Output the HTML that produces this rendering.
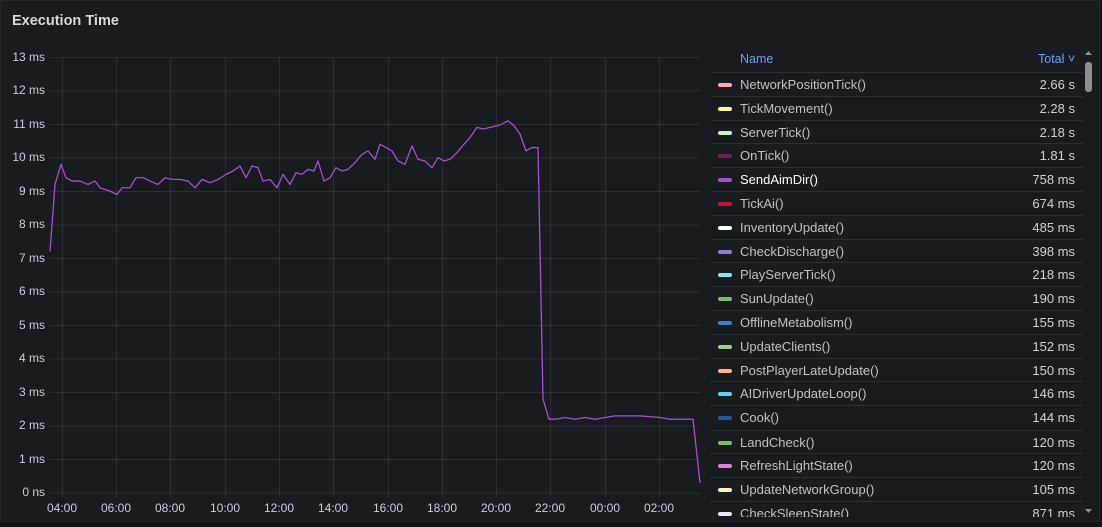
<!DOCTYPE html>
<html><head><meta charset="utf-8"><style>
*{margin:0;padding:0;box-sizing:border-box}
body{width:1102px;height:527px;background:#111217;overflow:hidden;font-family:"Liberation Sans",sans-serif;position:relative}
.panel{position:absolute;left:0;top:0;width:1100px;height:522px;background:#181b1f;border:1px solid #25272d;border-radius:2px}
.title{position:absolute;left:12px;top:13px;color:#d8d9dc;font-size:14.5px;font-weight:bold}
.yl{position:absolute;right:1057px;color:#ccccdc;font-size:12px;width:40px;text-align:right}
.xl{position:absolute;top:501px;color:#ccccdc;font-size:12px;width:50px;text-align:center}
.hdr{position:absolute;top:52px;color:#6e9fff;font-size:12.5px}
.row{position:absolute;left:710px;width:373px;height:24px;border-top:1px solid #2c2e33;font-size:13px;color:#bfc0c6}
.row .d{position:absolute;left:8px;top:10px;width:14px;height:4px;border-radius:2px}
.row .n{position:absolute;left:30px;top:4px}
.row .v{position:absolute;right:8px;top:4px;color:#d0d1d6}
</style></head><body>
<div class="panel"></div>
<div class="title">Execution Time</div>
<svg style="position:absolute;left:0;top:0" width="1102" height="527">
<g stroke="#2c2e33" stroke-width="1">
<line x1="50" x2="700" y1="57.5" y2="57.5"/><line x1="50" x2="700" y1="91" y2="91"/><line x1="50" x2="700" y1="124.5" y2="124.5"/><line x1="50" x2="700" y1="158" y2="158"/><line x1="50" x2="700" y1="191.5" y2="191.5"/><line x1="50" x2="700" y1="225" y2="225"/><line x1="50" x2="700" y1="258.5" y2="258.5"/><line x1="50" x2="700" y1="292" y2="292"/><line x1="50" x2="700" y1="325.5" y2="325.5"/><line x1="50" x2="700" y1="359" y2="359"/><line x1="50" x2="700" y1="392.5" y2="392.5"/><line x1="50" x2="700" y1="426" y2="426"/><line x1="50" x2="700" y1="459.5" y2="459.5"/><line x1="50" x2="700" y1="493" y2="493"/>
<line y1="57" y2="497" x1="62.5" x2="62.5"/><line y1="57" y2="497" x1="116.5" x2="116.5"/><line y1="57" y2="497" x1="170.5" x2="170.5"/><line y1="57" y2="497" x1="225.5" x2="225.5"/><line y1="57" y2="497" x1="279.5" x2="279.5"/><line y1="57" y2="497" x1="333.5" x2="333.5"/><line y1="57" y2="497" x1="388.5" x2="388.5"/><line y1="57" y2="497" x1="442.5" x2="442.5"/><line y1="57" y2="497" x1="496.5" x2="496.5"/><line y1="57" y2="497" x1="550.5" x2="550.5"/><line y1="57" y2="497" x1="605.5" x2="605.5"/><line y1="57" y2="497" x1="659.5" x2="659.5"/>
</g>
<g transform="translate(0,493) scale(1,-33.54)">
<polyline fill="none" stroke="#a352cc" stroke-width="1.3" vector-effect="non-scaling-stroke" stroke-linejoin="round" points="50,7.2 55,9.2 61,9.8 66,9.4 72,9.3 80,9.3 88,9.2 95,9.3 100,9.1 110,9.0 117,8.9 122,9.1 130,9.1 136,9.4 143,9.4 150,9.3 158,9.2 165,9.4 172,9.35 180,9.35 188,9.3 195,9.1 202,9.35 210,9.25 218,9.35 226,9.5 233,9.6 240,9.75 246,9.4 252,9.75 258,9.7 263,9.3 270,9.35 277,9.1 283,9.5 290,9.2 296,9.55 302,9.5 308,9.65 314,9.6 318,9.9 324,9.3 330,9.4 336,9.7 342,9.6 348,9.65 355,9.85 362,10.1 368,10.2 375,9.95 380,10.4 386,10.3 392,10.2 398,9.9 405,9.8 412,10.35 418,9.95 425,9.9 432,9.7 438,10 444,9.9 450,9.95 457,10.15 464,10.4 470,10.6 477,10.9 483,10.85 490,10.9 497,10.95 502,11 508,11.1 514,10.95 520,10.7 526,10.2 532,10.3 538,10.3 543,2.8 549,2.2 556,2.2 565,2.25 575,2.2 585,2.25 595,2.2 605,2.25 615,2.3 640,2.3 660,2.25 670,2.2 680,2.2 693,2.2 700,0.3"/>
</g>
<rect x="1085" y="62" width="7" height="30" rx="3" fill="#8e8e95"/>
<path d="M1085,55 l3.5,-4 l3.5,4z" fill="#8e8e95"/><path d="M1085,509 l3.5,4 l3.5,-4z" fill="#8e8e95"/>
</svg>
<div class="yl" style="top:50px">13 ms</div><div class="yl" style="top:83px">12 ms</div><div class="yl" style="top:117px">11 ms</div><div class="yl" style="top:150px">10 ms</div><div class="yl" style="top:184px">9 ms</div><div class="yl" style="top:217px">8 ms</div><div class="yl" style="top:251px">7 ms</div><div class="yl" style="top:284px">6 ms</div><div class="yl" style="top:318px">5 ms</div><div class="yl" style="top:351px">4 ms</div><div class="yl" style="top:385px">3 ms</div><div class="yl" style="top:418px">2 ms</div><div class="yl" style="top:452px">1 ms</div><div class="yl" style="top:485px">0 ns</div>
<div class="xl" style="left:37px">04:00</div><div class="xl" style="left:91px">06:00</div><div class="xl" style="left:145px">08:00</div><div class="xl" style="left:200px">10:00</div><div class="xl" style="left:254px">12:00</div><div class="xl" style="left:308px">14:00</div><div class="xl" style="left:363px">16:00</div><div class="xl" style="left:417px">18:00</div><div class="xl" style="left:471px">20:00</div><div class="xl" style="left:525px">22:00</div><div class="xl" style="left:580px">00:00</div><div class="xl" style="left:634px">02:00</div>
<div class="hdr" style="left:740px">Name</div><div class="hdr" style="left:1038px">Total ˅</div>
<div class="row" style="top:72px"><span class="d" style="background:#ffa6b0"></span><span class="n">NetworkPositionTick()</span><span class="v">2.66 s</span></div>
<div class="row" style="top:96px"><span class="d" style="background:#fff899"></span><span class="n">TickMovement()</span><span class="v">2.28 s</span></div>
<div class="row" style="top:120px"><span class="d" style="background:#c8f2c2"></span><span class="n">ServerTick()</span><span class="v">2.18 s</span></div>
<div class="row" style="top:143px"><span class="d" style="background:#6e1f5e"></span><span class="n">OnTick()</span><span class="v">1.81 s</span></div>
<div class="row" style="top:167px"><span class="d" style="background:#a352cc"></span><span class="n" style="color:#fff">SendAimDir()</span><span class="v">758 ms</span></div>
<div class="row" style="top:191px"><span class="d" style="background:#c4162a"></span><span class="n">TickAi()</span><span class="v">674 ms</span></div>
<div class="row" style="top:215px"><span class="d" style="background:#f0fcff"></span><span class="n">InventoryUpdate()</span><span class="v">485 ms</span></div>
<div class="row" style="top:239px"><span class="d" style="background:#8f7fcc"></span><span class="n">CheckDischarge()</span><span class="v">398 ms</span></div>
<div class="row" style="top:262px"><span class="d" style="background:#8ae0f5"></span><span class="n">PlayServerTick()</span><span class="v">218 ms</span></div>
<div class="row" style="top:286px"><span class="d" style="background:#73bf69"></span><span class="n">SunUpdate()</span><span class="v">190 ms</span></div>
<div class="row" style="top:310px"><span class="d" style="background:#3f7fc4"></span><span class="n">OfflineMetabolism()</span><span class="v">155 ms</span></div>
<div class="row" style="top:334px"><span class="d" style="background:#a6c98c"></span><span class="n">UpdateClients()</span><span class="v">152 ms</span></div>
<div class="row" style="top:358px"><span class="d" style="background:#ffb38a"></span><span class="n">PostPlayerLateUpdate()</span><span class="v">150 ms</span></div>
<div class="row" style="top:381px"><span class="d" style="background:#5dd2f0"></span><span class="n">AIDriverUpdateLoop()</span><span class="v">146 ms</span></div>
<div class="row" style="top:405px"><span class="d" style="background:#1f5a9c"></span><span class="n">Cook()</span><span class="v">144 ms</span></div>
<div class="row" style="top:430px"><span class="d" style="background:#73bf69"></span><span class="n">LandCheck()</span><span class="v">120 ms</span></div>
<div class="row" style="top:453px"><span class="d" style="background:#e07fd6"></span><span class="n">RefreshLightState()</span><span class="v">120 ms</span></div>
<div class="row" style="top:477px"><span class="d" style="background:#fff1c2"></span><span class="n">UpdateNetworkGroup()</span><span class="v">105 ms</span></div>
<div class="row" style="top:501px;height:16px;overflow:hidden"><span class="d" style="background:#e8e8ff"></span><span class="n">CheckSleepState()</span><span class="v">871 ms</span></div>
</body></html>
